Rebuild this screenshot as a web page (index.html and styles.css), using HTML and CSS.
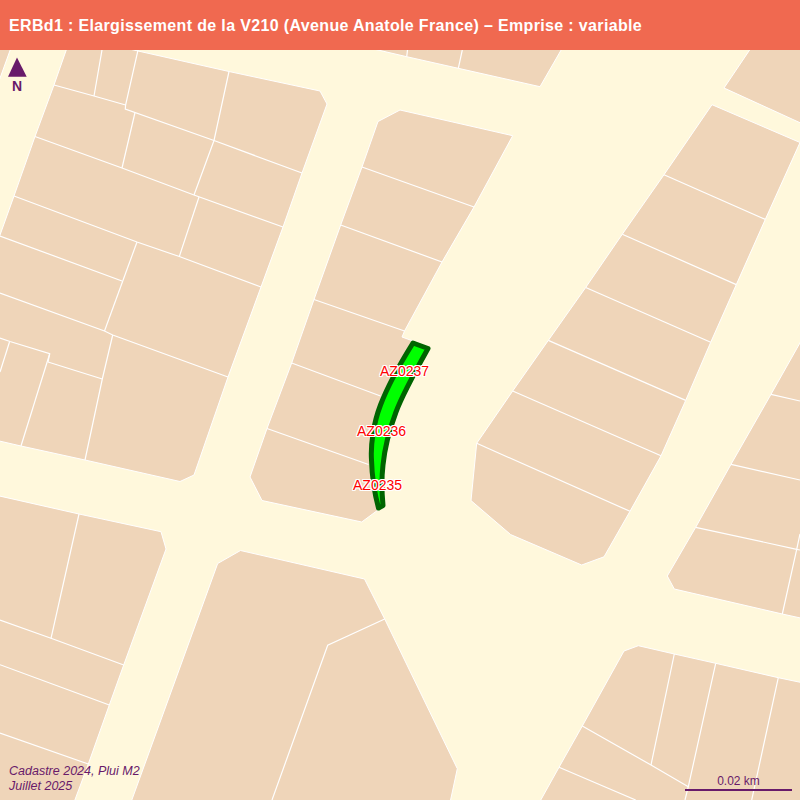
FILE: index.html
```html
<!DOCTYPE html>
<html lang="fr">
<head>
<meta charset="utf-8">
<title>ERBd1</title>
<link rel="stylesheet" href="styles.css">
</head>
<body>
<div class="page">
  <header class="title-bar">ERBd1 : Elargissement de la V210 (Avenue Anatole France) – Emprise : variable</header>
  <main class="map">
    <svg class="map-canvas" viewBox="0 50 800 750" width="800" height="750" xmlns="http://www.w3.org/2000/svg">
      <g class="parcels">
        <polygon points="-5,45 12,45 -5,92"/>
        <polygon points="68,45 54,85 35,136.5 14,196 -5,249 -5,440 21,446 85,460 180,481.5 194,475 228,377 261,287 283,227 302,173 327,104 320,91 229,71.5 138,51 112,45"/>
        <polygon points="378,121.5 400,110 512.7,135.7 474,207 442,262 404.5,331 402,337 413,341 408,358 395,385 384,410 378,435 375.5,460 376,485 378,510 361.7,522 262,500.5 250,477 267,428.5 291.7,363 314,299.5 340.7,225 362,167"/>
        <polygon points="355,45 378,50 406.7,56.7 458.3,68.3 540,86.7 564,45"/>
        <polygon points="753,45 724,88 805,125 805,45"/>
        <polygon points="712,104.7 800,142.5 765.3,219.4 736.3,284.6 710.7,342.3 685.7,400.4 661,455.8 630,511.3 604,556.8 581.7,565 510.7,534.6 471,500.6 476.7,443.3 512.7,391 548.3,340.4 585.7,287.5 622.3,234.2 664,174.7"/>
        <polygon points="805,334 771,394.3 731,464.3 695.7,527.3 667.3,576 674.3,589 782.3,614 805,619"/>
        <polygon points="-5,495 79,514 161,531.7 166,549 123.7,665 109.3,705 88.3,764 73,805 -5,805"/>
        <polygon points="217.7,563.5 240.5,550.5 364.5,579 384.7,619 457.3,768.7 449.5,805 130,805"/>
        <polygon points="624,651 638.3,645.7 674.3,654 715.7,663.3 778.3,677.7 805,683.3 805,805 538,805 559,767.3 582.3,726"/>
      </g>
      <g class="limits">
        <polyline points="54,85 94,96 125.6,105"/>
        <polyline points="102,50 94,96"/>
        <polyline points="138,50 125.6,105 125.3,109 214,140.5 302,173"/>
        <polyline points="229,71.5 214,140.5 194,195"/>
        <polyline points="135,112.5 122,168"/>
        <polyline points="35,136.5 122,168 194,195 283,227"/>
        <polyline points="199,197 179.3,256.5"/>
        <polyline points="14,196 137,242 179.3,256.5 261,287"/>
        <polyline points="137,242 104.5,331"/>
        <polyline points="0,236 122,281"/>
        <polyline points="0,293 104.5,331 112.7,335 228,377"/>
        <polyline points="112.7,335 102.3,379 85,460"/>
        <polyline points="48,362 102.3,379"/>
        <polyline points="0,338 10,341.5 49.7,353.7 48,362"/>
        <polyline points="49.7,353.7 21,446"/>
        <polyline points="9.5,342 0,372"/>
        <polyline points="362,167 474,207"/>
        <polyline points="340.7,225 442,262"/>
        <polyline points="314,299.5 404.5,331"/>
        <polyline points="291.7,363 380.5,396"/>
        <polyline points="267,428.5 368.5,464.5"/>
        <polyline points="407.5,50 406.7,56.7"/>
        <polyline points="462.3,50 458.3,68.3"/>
        <polyline points="664,174.7 765.3,219.4"/>
        <polyline points="622.3,234.2 736.3,284.6"/>
        <polyline points="585.7,287.5 710.7,342.3"/>
        <polyline points="548.3,340.4 685.7,400.4"/>
        <polyline points="512.7,391 661,455.8"/>
        <polyline points="476.7,443.3 630,511.3"/>
        <polyline points="771,394.3 800,401"/>
        <polyline points="731,464.3 800,480"/>
        <polyline points="695.7,527.3 796.7,549.3 800,550"/>
        <polyline points="800,534 796.7,549.3 782.3,614"/>
        <polyline points="79,514 51,638.3"/>
        <polyline points="0,620 51,638.3 123.7,665"/>
        <polyline points="0,664.7 109.3,705"/>
        <polyline points="0,733 88.3,764"/>
        <polyline points="384.7,619 327.7,645.3 272,800"/>
        <polyline points="674.3,654 651,765"/>
        <polyline points="582.3,726 651,765 688.3,786.7"/>
        <polyline points="715.7,663.3 688.3,786.7 685,800"/>
        <polyline points="778.3,677.7 751.7,800"/>
        <polyline points="559,767.3 635.7,800"/>
      </g>
      <path class="emprise" d="M413,343 C400.5,363 388.5,384 380.5,405 C373.5,423 370.5,445 371.5,460 C372,478 375,495 378.5,508 L383,505.5 C381.5,490 381.5,478 383,465 C384.5,450 388.5,432 396,412 C401.5,397 411,379 428,348.5 Z"/>
      <polygon class="north-arrow" points="17,57.5 26.7,76.7 8,76.7"/>
    </svg>
    <span class="north-label">N</span>
    <span class="parcel-label label-237">AZ0237</span>
    <span class="parcel-label label-236">AZ0236</span>
    <span class="parcel-label label-235">AZ0235</span>
    <p class="credits">Cadastre 2024, Plui M2<br>Juillet 2025</p>
    <div class="scale">
      <span class="scale-text">0.02 km</span>
      <span class="scale-bar"></span>
    </div>
  </main>
</div>
</body>
</html>
```
FILE: styles.css
```css
* {
  box-sizing: border-box;
}

html,
body {
  margin: 0;
  padding: 0;
}

body {
  font-family: "Liberation Sans", Arial, sans-serif;
  background: #fff8dc;
}

.page {
  display: flex;
  flex-direction: column;
  width: 800px;
  height: 800px;
  overflow: hidden;
}

.title-bar {
  flex: 0 0 50px;
  display: flex;
  align-items: center;
  padding: 2px 0 0 9px;
  background: #f06950;
  color: #ffffff;
  font-size: 16px;
  font-weight: 700;
  letter-spacing: 0.35px;
  white-space: nowrap;
}

.map {
  position: relative;
  flex: 1 1 auto;
  background: #fff8dc;
}

.map-canvas {
  display: block;
}

.parcels polygon {
  fill: #efd5b9;
  stroke: #ffffff;
  stroke-width: 1;
}

.limits polyline {
  fill: none;
  stroke: #ffffff;
  stroke-width: 1.2;
}

.emprise {
  fill: #00ff00;
  stroke: #006400;
  stroke-width: 5;
  stroke-linejoin: round;
}

.north-arrow {
  fill: #681a6a;
}

.north-label {
  position: absolute;
  left: 12px;
  top: 28px;
  color: #681a6a;
  font-size: 14px;
  font-weight: 700;
  line-height: 16px;
}

.parcel-label {
  position: absolute;
  color: #ff0000;
  font-size: 14px;
  line-height: 16px;
  white-space: nowrap;
  text-shadow: 1px 0 0 #fff, -1px 0 0 #fff, 0 1px 0 #fff, 0 -1px 0 #fff, 1px 1px 0 #fff, -1px -1px 0 #fff, 1px -1px 0 #fff, -1px 1px 0 #fff;
}

.label-237 {
  left: 380px;
  top: 313px;
}

.label-236 {
  left: 357px;
  top: 373px;
}

.label-235 {
  left: 353px;
  top: 427px;
}

.credits {
  position: absolute;
  left: 9px;
  top: 714px;
  margin: 0;
  color: #681a6a;
  font-size: 12.5px;
  font-style: italic;
  line-height: 15px;
}

.scale {
  position: absolute;
  left: 685px;
  top: 724px;
  width: 107px;
  display: flex;
  flex-direction: column;
  align-items: center;
}

.scale-text {
  color: #681a6a;
  font-size: 12px;
  line-height: 14px;
}

.scale-bar {
  width: 100%;
  height: 2px;
  margin-top: 1px;
  background: #681a6a;
}
```
